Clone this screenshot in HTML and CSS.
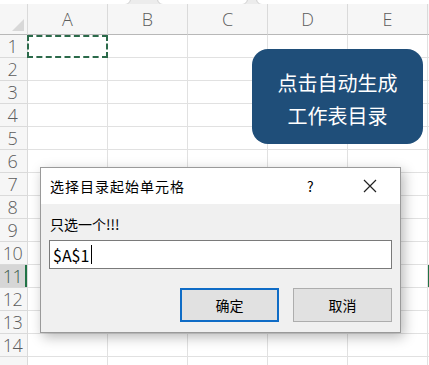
FILE: index.html
```html
<!DOCTYPE html>
<html lang="zh-CN">
<head>
  <meta charset="UTF-8" />
  <meta name="viewport" content="width=device-width, initial-scale=1.0"/>
  <title>选择目录起始单元格</title>
  <link rel="stylesheet" href="styles.css">
</head>
<body>

  <div class="tabs">
    <div class="tab tab1"></div>
    <div class="tab tab2"></div>
    <div class="tab tab3"></div>
  </div>

  <div class="sheet" id="sheet"></div>

  <div class="macro-btn">点击自动生成<br>工作表目录</div>

  <div class="dialog">
    <div class="dialog-title">
      <span class="title-text">选择目录起始单元格</span>
      <span class="title-help">?</span>
      <span class="title-close">
        <svg width="14" height="14" viewBox="0 0 14 14"><path d="M1 1 L13 13 M13 1 L1 13" stroke="#222" stroke-width="1.2" fill="none"/></svg>
      </span>
    </div>
    <div class="dialog-body">
      <div class="prompt">只选一个!!!</div>
      <div class="ref-input">$A$1<span class="caret"></span></div>
      <div class="actions">
        <button class="btn btn-ok">确定</button>
        <button class="btn">取消</button>
      </div>
    </div>
  </div>

  <script>
  // monta a grade da planilha
  const sheet = document.getElementById("sheet");
  const cols = ["A", "B", "C", "D", "E", ""];

  function cell(cls, text) {
    const d = document.createElement("div");
    d.className = cls;
    d.textContent = text || "";
    sheet.appendChild(d);
    return d;
  }

  const corner = cell("corner");
  corner.innerHTML = '<span class="corner-tri"></span>';
  cols.forEach(c => cell("col-head", c));

  for (let r = 1; r <= 14; r++) {
    cell(r === 11 ? "row-head row-sel" : "row-head", String(r));
    cols.forEach((c, i) => {
      let cls = "cell";
      if (r === 1 && i === 0) cls += " copied";
      if (r === 11 && i === 5) cls += " active";
      cell(cls);
    });
  }
  // última linha, cortada pela borda
  cell("row-head");
  cols.forEach(() => cell("cell"));
  </script>

</body>
</html>
```

FILE: styles.css
```css
body {
  margin: 0;
  width: 429px;
  height: 365px;
  overflow: hidden;
  background-color: #fff;
  font-family: "Noto Sans CJK SC", "Noto Sans", sans-serif;
  position: relative;
}

.tabs {
  height: 4px;
  background-color: #ececec;
  position: relative;
  overflow: hidden;
}

.tab {
  position: absolute;
  top: -10px;
  height: 13px;
  background-color: #fff;
  border: 1px solid #d0d0d0;
  border-radius: 6px;
}

.tab1 { left: -10px; width: 139px; }
.tab2 { left: 157px; width: 89px; }
.tab3 { left: 256px; width: 200px; }

.sheet {
  display: grid;
  grid-template-columns: 28px repeat(6, 80px);
  grid-template-rows: 31px;
  grid-auto-rows: 23px;
}

.corner,
.col-head,
.row-head {
  background-color: #f6f6f6;
  color: #5c5c5c;
  box-sizing: border-box;
  border-right: 1px solid #dadada;
  border-bottom: 1px solid #dadada;
}

.corner {
  position: relative;
  border-bottom: 1px solid #b8b8b8;
}

.corner-tri {
  position: absolute;
  right: 3px;
  bottom: 3px;
  width: 0;
  height: 0;
  border-left: 12px solid transparent;
  border-bottom: 12px solid #d8d8d8;
}

.col-head {
  border-bottom: 1px solid #b8b8b8;
  font-family: "Open Sans", "Noto Sans", sans-serif;
  font-size: 18px;
  font-weight: 300;
  line-height: 30px;
  text-align: center;
}

.row-head {
  font-family: "Open Sans", "Noto Sans", sans-serif;
  font-size: 18px;
  font-weight: 300;
  line-height: 22px;
  text-align: center;
  padding-right: 2px;
  letter-spacing: -0.5px;
}

.row-sel {
  background-color: #d6d6d6;
  color: #3f5f4d;
  box-shadow: inset -2px 0 0 #217346;
}

.cell {
  box-sizing: border-box;
  border-right: 1px solid #e1e1e1;
  border-bottom: 1px solid #e1e1e1;
}

.cell.copied {
  border: 2px dashed #2b6a4a;
  margin: 0 0 0 -1px;
}

.cell.active {
  box-shadow: inset 2px 0 0 #217346;
}

/* botão da macro */
.macro-btn {
  position: absolute;
  left: 252px;
  top: 49px;
  width: 171px;
  height: 95px;
  box-sizing: border-box;
  padding-top: 17px;
  border-radius: 16px;
  background-color: #1f4e79;
  color: #fff;
  font-size: 20px;
  line-height: 33px;
  text-align: center;
}

/* caixa de diálogo */
.dialog {
  position: absolute;
  left: 40px;
  top: 167px;
  width: 361px;
  height: 166px;
  box-sizing: border-box;
  border: 1px solid #9a9a9a;
  background-color: #f0f0f0;
  box-shadow: 3px 4px 12px rgba(0,0,0,0.28);
  display: flex;
  flex-direction: column;
}

.dialog-title {
  height: 36px;
  background-color: #fff;
  display: flex;
  align-items: center;
  padding-left: 9px;
  font-size: 14px;
  color: #000;
}

.title-text {
  flex: 1;
  letter-spacing: 1px;
}

.title-help {
  width: 14px;
  margin-right: 42px;
  font-size: 14px;
}

.title-close {
  width: 14px;
  height: 14px;
  margin-right: 23px;
  display: flex;
}

.dialog-body {
  flex: 1;
  padding: 10px 8px 0 8px;
}

.prompt {
  font-size: 14px;
  line-height: 20px;
  padding-left: 1px;
  margin-bottom: 6px;
}

.ref-input {
  height: 29px;
  box-sizing: border-box;
  border: 1px solid #7a7a7a;
  background-color: #fff;
  font-size: 16px;
  line-height: 26px;
  padding-left: 3px;
  display: flex;
  align-items: center;
}

.caret {
  width: 1px;
  height: 19px;
  margin-left: 2px;
  background-color: #000;
}

.actions {
  display: flex;
  justify-content: flex-end;
  gap: 14px;
  margin-top: 19px;
}

.btn {
  width: 99px;
  height: 34px;
  box-sizing: border-box;
  border: 1px solid #adadad;
  background-color: #e1e1e1;
  font-family: "Noto Sans CJK SC", sans-serif;
  font-size: 14px;
  color: #000;
  padding: 0;
}

.btn-ok {
  border: 2px solid #0f6cc6;
}
```
